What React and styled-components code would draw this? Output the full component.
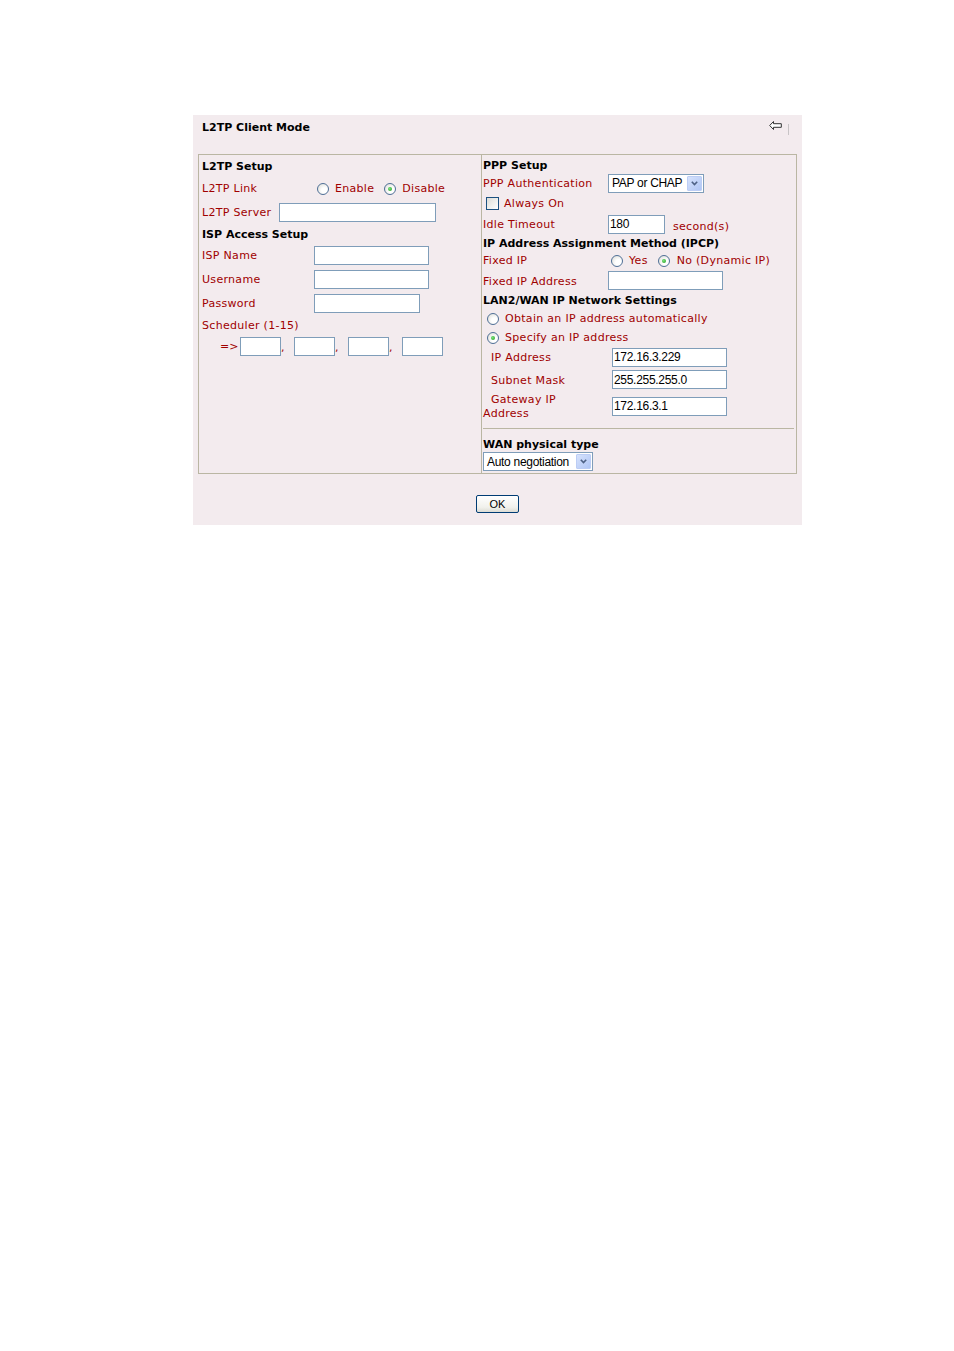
import React from "react";
import styled, { createGlobalStyle } from "styled-components";

const GlobalStyle = createGlobalStyle`
  body {
    margin: 0;
    background-color: #ffffff;
    font-family: "DejaVu Sans", Verdana, sans-serif;
  }
`;

const Page = styled.div`
  padding: 115px 0 0 193px;
`;

const Panel = styled.div`
  width: 609px;
  height: 410px;
  box-sizing: border-box;
  padding: 0 5px;
  background-color: #f3ebee;
  display: flex;
  flex-direction: column;
`;

const TitleBar = styled.div`
  height: 39px;
  display: flex;
  justify-content: space-between;
  align-items: flex-start;
  padding: 6px 8px 0 4px;
  box-sizing: border-box;
`;

const Title = styled.span`
  font-size: 11px;
  font-weight: bold;
  line-height: 14px;
  color: #000;
`;

const Tools = styled.div`
  display: flex;
  align-items: flex-start;
  gap: 6px;

  svg {
    margin-top: 0;
  }
`;

const ToolDivider = styled.span`
  width: 1px;
  height: 11px;
  margin-top: 3px;
  background-color: #c8c4c6;
`;

const Table = styled.div`
  display: grid;
  grid-template-columns: 282px 315px;
  border: 1px solid #bab6a3;
`;

const Cell = styled.div`
  display: flex;
  flex-direction: column;
  padding: 2px 0 2px ${(p) => p.$pad}px;
  border-left: ${(p) => (p.$divider ? "1px solid #bab6a3" : "none")};
`;

const Row = styled.div`
  height: ${(p) => p.$h}px;
  display: flex;
  align-items: center;
  padding-left: ${(p) => p.$indent || 0}px;
`;

const Heading = styled.span`
  font-size: 11px;
  font-weight: bold;
  color: #000;
`;

const Label = styled.span`
  font-size: 11px;
  letter-spacing: 0.3px;
  color: #a00000;
  width: ${(p) => (p.$w ? `${p.$w}px` : "auto")};
  flex-shrink: 0;
  margin-right: ${(p) => p.$gap || 0}px;
  margin-left: ${(p) => p.$ml || 0}px;
  text-indent: ${(p) => p.$textIndent || 0}px;
  line-height: 14px;
  padding-top: ${(p) => (p.$low ? 5 : 2)}px;
`;

const TextInput = styled.input`
  box-sizing: border-box;
  width: ${(p) => p.$w}px;
  height: 19px;
  margin: 0;
  padding: 0 1px;
  border: 1px solid #7f9db9;
  background-color: #fff;
  font-family: "Liberation Sans", Arial, sans-serif;
  font-size: 12px;
  letter-spacing: -0.3px;
  color: #000;
  outline: none;
`;

const Option = styled.span`
  display: inline-flex;
  align-items: center;
  margin-left: ${(p) => p.$ml || 0}px;
`;

const RadioDot = styled.span`
  width: 12px;
  height: 12px;
  box-sizing: border-box;
  border-radius: 50%;
  border: 1px solid #4f6f96;
  background: radial-gradient(circle at 65% 65%, #ffffff 30%, #d8d8d2 100%);
  display: inline-flex;
  align-items: center;
  justify-content: center;
  margin: 2px ${(p) => p.$mr || 6}px 0 0;

  &::after {
    content: "";
    width: 4px;
    height: 4px;
    border-radius: 50%;
    background: ${(p) => (p.$checked ? "radial-gradient(circle at 40% 40%, #7be37b, #1e9a1e)" : "transparent")};
  }
`;

const CheckBox = styled.span`
  width: 13px;
  height: 13px;
  box-sizing: border-box;
  border: 1px solid #1c5180;
  background: linear-gradient(135deg, #dcdcd7 0%, #ffffff 100%);
  margin: 0 5px 0 3px;
`;

const SelectBox = styled.div`
  box-sizing: border-box;
  width: ${(p) => p.$w}px;
  height: 19px;
  border: 1px solid #7f9db9;
  background-color: #fff;
  display: flex;
  align-items: center;
  justify-content: space-between;
  padding: 0 1px 0 3px;
`;

const SelectValue = styled.span`
  font-family: "Liberation Sans", Arial, sans-serif;
  font-size: 12px;
  letter-spacing: -0.3px;
  color: #000;
  white-space: nowrap;
`;

const DropButton = styled.span`
  width: 15px;
  height: 15px;
  box-sizing: border-box;
  border: 1px solid #bccdf5;
  border-radius: 1px;
  background: linear-gradient(135deg, #d6e2fc 0%, #b0c6f5 100%);
  display: flex;
  align-items: center;
  justify-content: center;
`;

const Comma = styled.span`
  font-size: 11px;
  color: #a00000;
  width: 13px;
  align-self: flex-end;
  line-height: 14px;
`;

const Arrow = styled.span`
  font-size: 11px;
  color: #a00000;
  width: 20px;
  padding-top: 1px;
`;

const Separator = styled.div`
  height: 1px;
  margin: 7px 2px 7px 0;
  background-color: #bab6a3;
`;

const Footer = styled.div`
  display: flex;
  justify-content: center;
  padding-top: 21px;
`;

const OkButton = styled.button`
  width: 43px;
  height: 18px;
  box-sizing: border-box;
  padding: 0;
  border: 1px solid #003c74;
  border-radius: 2px;
  background: linear-gradient(180deg, #ffffff 0%, #f1f1ec 70%, #dcdcd4 100%);
  font-family: "Liberation Sans", Arial, sans-serif;
  font-size: 11px;
  color: #000;
`;

function BackIcon() {
  return (
    <svg width="13" height="9" viewBox="0 0 13 9">
      <path
        d="M4.5 0.5 L0.7 4.5 L4.5 8.5 L4.5 6.3 L12.3 6.3 L12.3 2.7 L4.5 2.7 Z"
        fill="#ffffff"
        stroke="#333"
        strokeWidth="1"
        strokeLinejoin="miter"
      />
    </svg>
  );
}

function Select({ w, value }) {
  return (
    <SelectBox $w={w}>
      <SelectValue>{value}</SelectValue>
      <DropButton>
        <svg width="7" height="5" viewBox="0 0 7 5">
          <path d="M0.8 0.8 L3.5 3.6 L6.2 0.8" fill="none" stroke="#4d6185" strokeWidth="1.6" />
        </svg>
      </DropButton>
    </SelectBox>
  );
}

function Radio({ checked, children, ml, mr }) {
  return (
    <Option $ml={ml}>
      <RadioDot $checked={checked} $mr={mr} />
      <Label>{children}</Label>
    </Option>
  );
}

export default function App() {
  return (
    <>
      <GlobalStyle />
      <Page>
        <Panel>
          <TitleBar>
            <Title>L2TP Client Mode</Title>
            <Tools>
              <BackIcon />
              <ToolDivider />
            </Tools>
          </TitleBar>

          <Table>
            <Cell $pad={3}>
              <Row $h={18}>
                <Heading>L2TP Setup</Heading>
              </Row>
              <Row $h={26}>
                <Label $w={115}>L2TP Link</Label>
                <Radio>Enable</Radio>
                <Radio ml={10} checked>
                  Disable
                </Radio>
              </Row>
              <Row $h={22}>
                <Label $gap={8}>L2TP Server</Label>
                <TextInput $w={157} />
              </Row>
              <Row $h={22}>
                <Heading>ISP Access Setup</Heading>
              </Row>
              <Row $h={20}>
                <Label $w={112}>ISP Name</Label>
                <TextInput $w={115} />
              </Row>
              <Row $h={28}>
                <Label $w={112}>Username</Label>
                <TextInput $w={115} />
              </Row>
              <Row $h={20}>
                <Label $w={112}>Password</Label>
                <TextInput $w={106} />
              </Row>
              <Row $h={24}>
                <Label>Scheduler (1-15)</Label>
              </Row>
              <Row $h={18} $indent={18}>
                <Arrow>=&gt;</Arrow>
                <TextInput $w={41} />
                <Comma>,</Comma>
                <TextInput $w={41} />
                <Comma>,</Comma>
                <TextInput $w={41} />
                <Comma>,</Comma>
                <TextInput $w={41} />
              </Row>
            </Cell>

            <Cell $pad={1} $divider>
              <Row $h={16}>
                <Heading>PPP Setup</Heading>
              </Row>
              <Row $h={20}>
                <Label $w={125}>PPP Authentication</Label>
                <Select w={96} value="PAP or CHAP" />
              </Row>
              <Row $h={20}>
                <CheckBox />
                <Label>Always On</Label>
              </Row>
              <Row $h={22}>
                <Label $w={125}>Idle Timeout</Label>
                <TextInput $w={57} defaultValue="180" />
                <Label $ml={8} $low>
                  second(s)
                </Label>
              </Row>
              <Row $h={16}>
                <Heading>IP Address Assignment Method (IPCP)</Heading>
              </Row>
              <Row $h={18}>
                <Label $w={128}>Fixed IP</Label>
                <Radio>Yes</Radio>
                <Radio ml={10} mr={7} checked>
                  No (Dynamic IP)
                </Radio>
              </Row>
              <Row $h={23}>
                <Label $w={125}>Fixed IP Address</Label>
                <TextInput $w={115} />
              </Row>
              <Row $h={16}>
                <Heading>LAN2/WAN IP Network Settings</Heading>
              </Row>
              <Row $h={20} $indent={4}>
                <Radio>Obtain an IP address automatically</Radio>
              </Row>
              <Row $h={18} $indent={4}>
                <Radio checked>Specify an IP address</Radio>
              </Row>
              <Row $h={22}>
                <Label $w={129} $textIndent={8}>
                  IP Address
                </Label>
                <TextInput $w={115} defaultValue="172.16.3.229" />
              </Row>
              <Row $h={23}>
                <Label $w={129} $textIndent={8}>
                  Subnet Mask
                </Label>
                <TextInput $w={115} defaultValue="255.255.255.0" />
              </Row>
              <Row $h={30}>
                <Label $w={100} $gap={29} $textIndent={8}>
                  Gateway IP Address
                </Label>
                <TextInput $w={115} defaultValue="172.16.3.1" />
              </Row>
              <Separator />
              <Row $h={16}>
                <Heading>WAN physical type</Heading>
              </Row>
              <Row $h={19}>
                <Select w={110} value="Auto negotiation" />
              </Row>
            </Cell>
          </Table>

          <Footer>
            <OkButton>OK</OkButton>
          </Footer>
        </Panel>
      </Page>
    </>
  );
}
